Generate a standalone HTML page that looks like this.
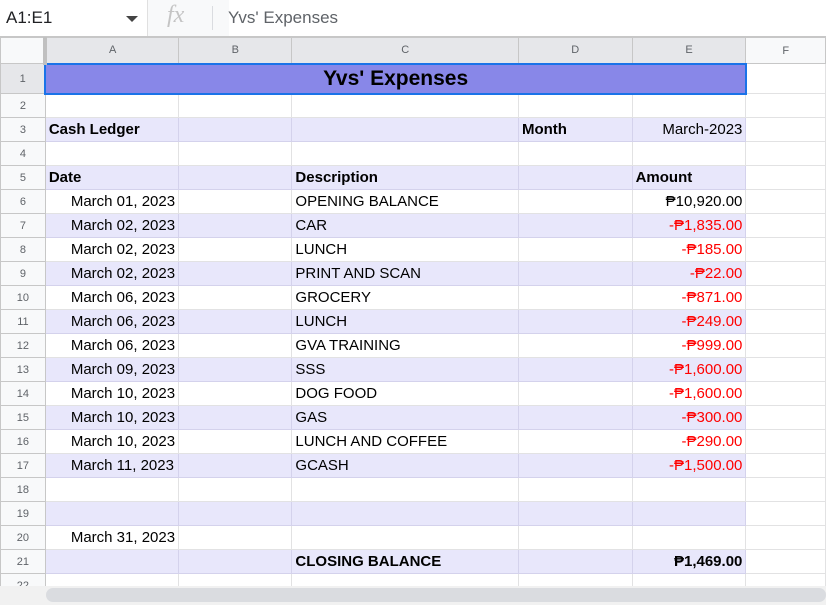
<!DOCTYPE html>
<html><head><style>
body{margin:0;width:826px;height:605px;overflow:hidden;background:#fff;font-family:"Liberation Sans",Arial,sans-serif;position:relative}
.fb{position:absolute;left:0;top:0;width:826px;height:36px;border-bottom:1px solid #c7c7c7;background:#fff}
.nb{position:absolute;left:6px;top:8px;font-size:17px;color:#202124}
.dd{position:absolute;left:126px;top:16px;width:0;height:0;border-left:6px solid transparent;border-right:6px solid transparent;border-top:6px solid #444}
.fxb{position:absolute;left:147px;top:0;width:81px;height:36px;background:#f8f9fa;border-left:1px solid #e0e0e0}
.fx{position:absolute;left:167px;top:2px;font-family:"Liberation Serif",serif;font-style:italic;font-size:24px;color:#c4c4c4}
.sep{position:absolute;left:212px;top:6px;width:1px;height:24px;background:#dadce0}
.fv{position:absolute;left:228px;top:8px;font-size:17px;color:#5f6368}
table{position:absolute;left:0;top:37px;border-collapse:collapse;table-layout:fixed}
td{border:1px solid #e2e2e3;padding:0 3px;font-size:15px;color:#000;white-space:nowrap;overflow:hidden;height:24px;box-sizing:border-box}
tr{height:24px}
tr.h td{background:#e6e7ea;color:#5f6368;font-size:11px;text-align:center;height:26px;border-color:#c7c7c7}
tr.h td.f{background:#f8f9fa}
td.rh{background:#f8f9fa;color:#5f6368;font-size:11px;text-align:center;border-color:#c7c7c7}
tr.s td{background:#e8e7fb;border-color:#d4d2ec}
tr.s td.rh{background:#f8f9fa;border-color:#c7c7c7}
tr.s td.f{background:#fff;border-color:#e2e2e3}
.b{font-weight:bold;font-size:15px}
.r{text-align:right}
.red{color:#ff0000}
.d{padding-left:25px}
.scroll{position:absolute;left:0;top:586px;width:826px;height:19px;background:#f1f1f1}
.thumb{position:absolute;left:46px;top:588px;width:780px;height:14px;background:#dadce0;border-radius:7px}
</style></head><body>
<div class="fb"><div class="nb">A1:E1</div><div class="dd"></div><div class="fxb"></div><div class="fx">fx</div><div class="sep"></div><div class="fv">Yvs' Expenses</div></div>
<table>
<colgroup><col style="width:45px"><col style="width:133px"><col style="width:114px"><col style="width:227px"><col style="width:114px"><col style="width:114px"><col style="width:80px"></colgroup>
<tr class="h" style="height:26px"><td style="background:#f8f9fa;border-right:4px solid #c0c0c0"></td><td>A</td><td>B</td><td>C</td><td>D</td><td>E</td><td class="f">F</td></tr>
<tr style="height:30px"><td class="rh" style="height:30px;background:#e6e7ea">1</td><td colspan="5" style="height:30px;background:#8887e8;border:2px solid #1a73e8;text-align:center;font-weight:bold;font-size:21px">Yvs' Expenses</td><td></td></tr>
<tr><td class="rh">2</td><td></td><td></td><td></td><td></td><td></td><td></td></tr>
<tr class="s"><td class="rh">3</td><td class="b">Cash Ledger</td><td></td><td></td><td class="b">Month</td><td class="r">March-2023</td><td class="f"></td></tr>
<tr><td class="rh">4</td><td></td><td></td><td></td><td></td><td></td><td></td></tr>
<tr class="s"><td class="rh">5</td><td class="b">Date</td><td></td><td class="b">Description</td><td></td><td class="b">Amount</td><td class="f"></td></tr>
<tr><td class="rh">6</td><td class="d">March 01, 2023</td><td></td><td>OPENING BALANCE</td><td></td><td class="r">₱10,920.00</td><td></td></tr>
<tr class="s"><td class="rh">7</td><td class="d">March 02, 2023</td><td></td><td>CAR</td><td></td><td class="r red">-₱1,835.00</td><td class="f"></td></tr>
<tr><td class="rh">8</td><td class="d">March 02, 2023</td><td></td><td>LUNCH</td><td></td><td class="r red">-₱185.00</td><td></td></tr>
<tr class="s"><td class="rh">9</td><td class="d">March 02, 2023</td><td></td><td>PRINT AND SCAN</td><td></td><td class="r red">-₱22.00</td><td class="f"></td></tr>
<tr><td class="rh">10</td><td class="d">March 06, 2023</td><td></td><td>GROCERY</td><td></td><td class="r red">-₱871.00</td><td></td></tr>
<tr class="s"><td class="rh">11</td><td class="d">March 06, 2023</td><td></td><td>LUNCH</td><td></td><td class="r red">-₱249.00</td><td class="f"></td></tr>
<tr><td class="rh">12</td><td class="d">March 06, 2023</td><td></td><td>GVA TRAINING</td><td></td><td class="r red">-₱999.00</td><td></td></tr>
<tr class="s"><td class="rh">13</td><td class="d">March 09, 2023</td><td></td><td>SSS</td><td></td><td class="r red">-₱1,600.00</td><td class="f"></td></tr>
<tr><td class="rh">14</td><td class="d">March 10, 2023</td><td></td><td>DOG FOOD</td><td></td><td class="r red">-₱1,600.00</td><td></td></tr>
<tr class="s"><td class="rh">15</td><td class="d">March 10, 2023</td><td></td><td>GAS</td><td></td><td class="r red">-₱300.00</td><td class="f"></td></tr>
<tr><td class="rh">16</td><td class="d">March 10, 2023</td><td></td><td>LUNCH AND COFFEE</td><td></td><td class="r red">-₱290.00</td><td></td></tr>
<tr class="s"><td class="rh">17</td><td class="d">March 11, 2023</td><td></td><td>GCASH</td><td></td><td class="r red">-₱1,500.00</td><td class="f"></td></tr>
<tr><td class="rh">18</td><td></td><td></td><td></td><td></td><td></td><td></td></tr>
<tr class="s"><td class="rh">19</td><td></td><td></td><td></td><td></td><td></td><td class="f"></td></tr>
<tr><td class="rh">20</td><td class="d">March 31, 2023</td><td></td><td></td><td></td><td></td><td></td></tr>
<tr class="s"><td class="rh">21</td><td></td><td></td><td class="b">CLOSING BALANCE</td><td></td><td class="r b">₱1,469.00</td><td class="f"></td></tr>
<tr><td class="rh">22</td><td></td><td></td><td></td><td></td><td></td><td></td></tr>
</table>
<div class="scroll"></div><div class="thumb"></div>
</body></html>
